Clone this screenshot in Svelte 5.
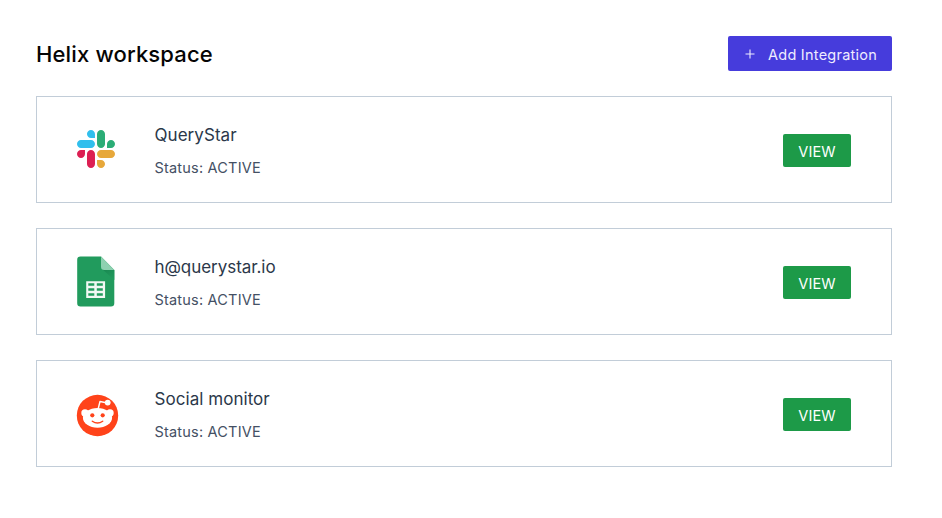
<script>
  const integrations = [
    { kind: 'slack', name: 'QueryStar', status: 'ACTIVE' },
    { kind: 'sheets', name: 'h@querystar.io', status: 'ACTIVE' },
    { kind: 'reddit', name: 'Social monitor', status: 'ACTIVE' }
  ];
</script>

<main>
  <header>
    <h1>Helix workspace</h1>
    <button class="add">
      <svg width="10" height="10" viewBox="0 0 10 10" aria-hidden="true">
        <path d="M5 .5v9M.5 5h9" stroke="currentColor" stroke-width="1.1" fill="none" />
      </svg>
      <span>Add Integration</span>
    </button>
  </header>

  <div class="list">
    {#each integrations as item (item.kind)}
      <section class="card">
        <div class="logo {item.kind}">
          {#if item.kind === 'slack'}
            <svg width="38" height="38" viewBox="0 0 122.8 122.8" aria-hidden="true">
              <path fill="#dc1f53" d="M25.8 77.6c0 7.1-5.8 12.9-12.9 12.9S0 84.7 0 77.6s5.8-12.9 12.9-12.9h12.9v12.9zm6.5 0c0-7.1 5.8-12.9 12.9-12.9s12.9 5.8 12.9 12.9v32.3c0 7.1-5.8 12.9-12.9 12.9s-12.9-5.8-12.9-12.9V77.6z" />
              <path fill="#30bfed" d="M45.2 25.8c-7.1 0-12.9-5.8-12.9-12.9S38.1 0 45.2 0s12.9 5.8 12.9 12.9v12.9H45.2zm0 6.5c7.1 0 12.9 5.8 12.9 12.9s-5.8 12.9-12.9 12.9H12.9C5.8 58.1 0 52.3 0 45.2s5.8-12.9 12.9-12.9h32.3z" />
              <path fill="#2bad76" d="M97 45.2c0-7.1 5.8-12.9 12.9-12.9s12.9 5.8 12.9 12.9-5.8 12.9-12.9 12.9H97V45.2zm-6.5 0c0 7.1-5.8 12.9-12.9 12.9s-12.9-5.8-12.9-12.9V12.9C64.7 5.8 70.5 0 77.6 0s12.9 5.8 12.9 12.9v32.3z" />
              <path fill="#e7a83a" d="M77.6 97c7.1 0 12.9 5.8 12.9 12.9s-5.8 12.9-12.9 12.9-12.9-5.8-12.9-12.9V97h12.9zm0-6.5c-7.1 0-12.9-5.8-12.9-12.9s5.8-12.9 12.9-12.9h32.3c7.1 0 12.9 5.8 12.9 12.9s-5.8 12.9-12.9 12.9H77.6z" />
            </svg>
          {:else if item.kind === 'sheets'}
            <svg width="38" height="51" viewBox="0 0 38 51" aria-hidden="true">
              <defs>
                <linearGradient id="fold-shade" x1="0" y1="0" x2=".7" y2="1">
                  <stop offset="0" stop-color="#188650" />
                  <stop offset="1" stop-color="#219b5d" />
                </linearGradient>
              </defs>
              <path fill="#219b5d" d="M3.5.5H24L37.3 14v33.2a3.3 3.3 0 0 1-3.3 3.3H3.5A3.3 3.3 0 0 1 .2 47.2V3.8A3.3 3.3 0 0 1 3.5.5z" />
              <path fill="url(#fold-shade)" d="M25 13l12.3 11V14z" />
              <path fill="#8ed1b1" d="M24 .5V10.700a3.300 3.300 0 0 0 3.300 3.300h10z" />
              <path fill="#f1f8f4" fill-rule="evenodd" d="M9.200 25.200h18.900v16.800H9.200zM11.300 27.300v2.500h6v-2.500zm8.500 0v2.500h6v-2.500zm-8.500 4.900v2.600h6v-2.600zm8.500 0v2.600h6v-2.600zm-8.500 5v2.600h6v-2.600zm8.500 0v2.600h6v-2.600z" />
            </svg>
          {:else}
            <svg width="42" height="42" viewBox="0 0 42 42" aria-hidden="true">
              <circle cx="20.500" cy="20.500" r="20.700" fill="#ff431a" />
              <path d="M21 14.500L23 6.500l7.500 1.500" fill="none" stroke="#fff" stroke-width="1.400" stroke-linejoin="round" />
              <g fill="#fff">
                <circle cx="30.700" cy="7.600" r="2.900" />
                <circle cx="8" cy="18" r="3.700" />
                <circle cx="33" cy="18" r="3.700" />
                <ellipse cx="20.500" cy="22.800" rx="14.600" ry="9.900" />
              </g>
              <g fill="#ff431a">
                <circle cx="15.300" cy="20.300" r="2.100" />
                <circle cx="25.700" cy="20.300" r="2.100" />
              </g>
              <path d="M15.300 26.200q5.200 3.700 10.400 0" fill="none" stroke="#ff431a" stroke-width="1.400" stroke-linecap="round" />
            </svg>
          {/if}
        </div>
        <div class="info">
          <h2 class={item.kind}>{item.name}</h2>
          <p>Status: {item.status}</p>
        </div>
        <button class="view">VIEW</button>
      </section>
    {/each}
  </div>
</main>

<style>
  :global(body) {
    background: #fff;
    font-family: Inter, "Liberation Sans", sans-serif;
  }

  main {
    padding: 36px 50px 0 36px;
  }

  header {
    display: flex;
    justify-content: space-between;
    height: 35px;
  }

  h1 {
    margin: 0;
    font-size: 22px;
    line-height: 36px;
    font-weight: 500;
    letter-spacing: 0.15px;
    color: #050505;
  }

  button {
    box-sizing: border-box;
    border: 0;
    font-family: inherit;
    color: #fff;
    border-radius: 2px;
  }

  .add {
    display: flex;
    align-items: center;
    width: 164px;
    height: 35px;
    padding: 1px 0 0 17px;
    gap: 13px;
    background: #463cdc;
    color: #eeecff;
    font-size: 14.500px;
    letter-spacing: 0.25px;
    white-space: nowrap;
  }

  .add svg {
    margin-top: -1px;
  }

  .add span {
    padding-top: 1px;
  }

  .list {
    display: flex;
    flex-direction: column;
    gap: 25px;
    margin-top: 25px;
  }

  .card {
    box-sizing: border-box;
    display: flex;
    align-items: center;
    height: 107px;
    padding: 0 40px;
    border: 1px solid #c2cdd8;
  }

  .logo {
    display: flex;
    width: 77.500px;
  }

  .logo svg {
    overflow: visible;
  }

  .logo.slack {
    padding-bottom: 1px;
  }

  .logo.reddit {
    padding-top: 5px;
  }

  .info {
    flex: 1;
    padding-top: 1px;
  }

  h2 {
    margin: 0;
    font-size: 17px;
    line-height: 27px;
    font-weight: 400;
    letter-spacing: 0.05px;
    color: #2b384a;
  }

  h2.sheets {
    letter-spacing: -0.05px;
  }

  p {
    margin: 8px 0 0;
    font-size: 14.500px;
    line-height: 22px;
    letter-spacing: 0.2px;
    color: #445064;
  }

  .view {
    width: 68px;
    height: 33px;
    margin-top: 1px;
    padding: 2px 0 0;
    background: #1d9a48;
    font-size: 14.500px;
    letter-spacing: 0.1px;
  }
</style>
